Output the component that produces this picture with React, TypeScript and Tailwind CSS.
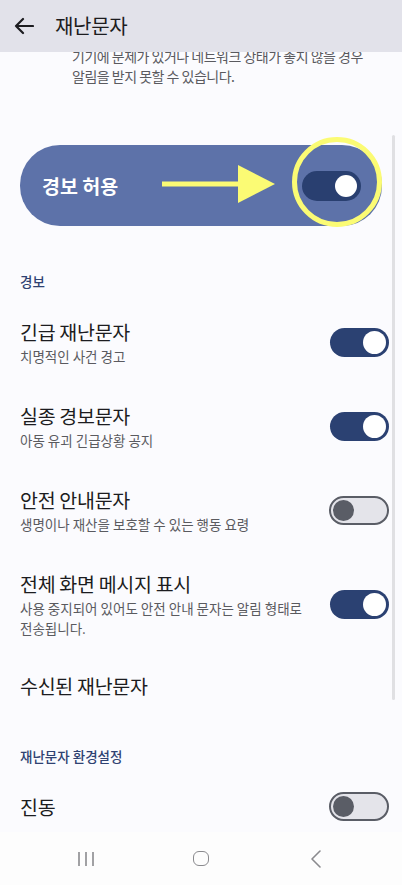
import React from 'react';

const font = { fontFamily: '"Noto Sans CJK KR", "Noto Sans", sans-serif' };

const Toggle = ({ on }: { on: boolean }) =>
  on ? (
    <div className="flex h-[29px] w-[59px] shrink-0 items-center justify-end rounded-full bg-[#2b4172] p-[3px]">
      <div className="h-[23px] w-[23px] rounded-full bg-white" />
    </div>
  ) : (
    <div className="flex h-[29px] w-[60px] shrink-0 items-center rounded-full border-[2.5px] border-[#5a5d66] bg-[#e4e4ea] px-[2px]">
      <div className="h-[21px] w-[21px] rounded-full bg-[#5a5d66]" />
    </div>
  );

const rows = [
  { title: '긴급 재난문자', sub: '치명적인 사건 경고', on: true },
  { title: '실종 경보문자', sub: '아동 유괴 긴급상황 공지', on: true },
  { title: '안전 안내문자', sub: '생명이나 재산을 보호할 수 있는 행동 요령', on: false },
  {
    title: '전체 화면 메시지 표시',
    sub: '사용 중지되어 있어도 안전 안내 문자는 알림 형태로 전송됩니다.',
    on: true,
  },
];

export default function App() {
  return (
    <div className="flex h-[885px] w-[402px] flex-col overflow-hidden bg-[#fbfbfe]" style={font}>
      {/* top bar */}
      <div className="z-10 flex h-[52px] shrink-0 items-center bg-[#e2e2ea]">
        <svg width="20" height="18" viewBox="0 0 20 18" className="ml-[14px]" fill="none" stroke="#1c1c20" strokeWidth="2.2" strokeLinecap="round" strokeLinejoin="round">
          <path d="M2 9h17M9 2 2 9l7 7" />
        </svg>
        <span className="ml-[21px] text-[20px] leading-[26px] tracking-[-0.3px] text-[#1c1c20]">재난문자</span>
      </div>

      <div className="relative flex-1 overflow-hidden">
        <div className="-mt-[6px]">
          <p className="pl-[72px] pr-[20px] text-[14px] leading-[20px] tracking-[-0.5px] text-[#5a5a5f]">
            기기에 문제가 있거나 네트워크 상태가 좋지 않을 경우
            <br />
            알림을 받지 못할 수 있습니다.
          </p>

          {/* master switch card */}
          <div className="relative mx-[20px] mt-[59px] flex h-[81px] items-center justify-between rounded-[40px] bg-[#5d72a9] pl-[22px] pr-[21px]">
            <span className="text-[19.5px] font-bold tracking-[0px] text-white">경보 허용</span>
            <div className="flex h-[30px] w-[59px] items-center justify-end rounded-full bg-[#293f70] p-[4px]">
              <div className="h-[22px] w-[22px] rounded-full bg-white" />
            </div>
            <svg className="absolute left-[142px] top-[19px]" width="114" height="40" viewBox="0 0 114 40">
              <rect x="0" y="17.5" width="80" height="5" fill="#fbfb74" />
              <polygon points="76,1 113,20 76,39" fill="#fbfb74" />
            </svg>
            <div className="absolute left-[272px] top-[-8px] h-[90px] w-[90px] rounded-full border-[5px] border-[#fbfb74]" />
          </div>

          <div className="pl-[20px] pt-[45px] pb-[9px] text-[13.5px] font-medium leading-[20px] tracking-[0px] text-[#2f4272]">
            경보
          </div>

          {rows.map((r) => (
            <div key={r.title} className="flex items-center pl-[20px] pr-[13px] pt-[19px] pb-[18px]">
              <div className="flex-1 pr-[16px]">
                <div className="text-[19.5px] leading-[26px] tracking-[-0.3px] text-[#1c1c20]">{r.title}</div>
                <div className="mt-[1px] break-keep text-[13.5px] leading-[20px] tracking-[0px] text-[#5a5a5f]">{r.sub}</div>
              </div>
              <Toggle on={r.on} />
            </div>
          ))}

          <div className="pl-[20px] pt-[17px] pb-[17px] text-[19.5px] leading-[26px] tracking-[-0.3px] text-[#1c1c20]">
            수신된 재난문자
          </div>

          <div className="pl-[20px] pt-[30px] pb-[7px] text-[13.5px] font-medium leading-[20px] tracking-[0px] text-[#2f4272]">
            재난문자 환경설정
          </div>

          <div className="flex items-center pl-[20px] pr-[13px] pt-[19px] pb-[18px]">
            <div className="flex-1 text-[19.5px] leading-[26px] tracking-[-0.3px] text-[#1c1c20]">진동</div>
            <Toggle on={false} />
          </div>
        </div>

        {/* scroll indicator */}
        <div className="absolute right-[7px] top-[83px] h-[565px] w-[3px] rounded-full bg-[#e0e0e3]" />
      </div>

      {/* system nav */}
      <div className="flex h-[53px] shrink-0 items-center justify-center bg-[#fdfdfd]">
        <div className="flex w-[115px] justify-center">
          <svg width="18" height="16" viewBox="0 0 18 16" stroke="#8a8a8e" strokeWidth="1.6">
            <path d="M2 1v14M9 1v14M16 1v14" />
          </svg>
        </div>
        <div className="flex w-[115px] justify-center">
          <div className="h-[15px] w-[16px] rounded-[6px] border-[1.6px] border-[#8a8a8e]" />
        </div>
        <div className="flex w-[115px] justify-center">
          <svg width="12" height="18" viewBox="0 0 12 18" fill="none" stroke="#8a8a8e" strokeWidth="1.6" strokeLinecap="round" strokeLinejoin="round">
            <path d="M10 1 2 9l8 8" />
          </svg>
        </div>
      </div>
    </div>
  );
}
